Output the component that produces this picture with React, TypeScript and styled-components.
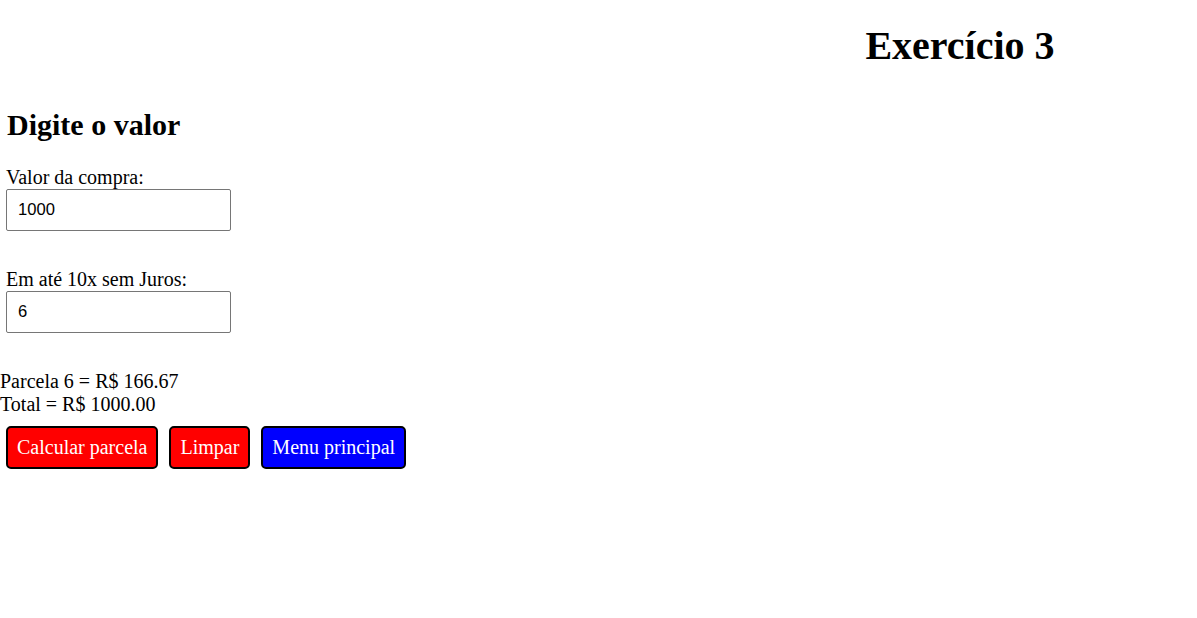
import React, { useState } from 'react';
import styled, { createGlobalStyle } from 'styled-components';

const GlobalStyle = createGlobalStyle`
  body {
    margin: 0;
    background: #ffffff;
    color: #000000;
    font-family: "Liberation Serif", "Times New Roman", serif;
    font-size: 20px;
  }
`;

const Header = styled.header`
  padding-left: 723px;
  text-align: center;
`;

const Title = styled.h1`
  margin: 23px 0 0;
  font-size: 40px;
  line-height: 46px;
  font-weight: bold;
`;

const Form = styled.form`
  padding: 0 6px;
`;

const Subtitle = styled.h2`
  margin: 39px 0 24px;
  font-size: 30px;
  line-height: 34px;
  font-weight: bold;
  padding-left: 1px;
`;

const Field = styled.div`
  display: flex;
  flex-direction: column;
  align-items: flex-start;
  margin-bottom: 37px;
`;

const Label = styled.label`
  display: block;
  font-size: 20px;
  line-height: 23px;
`;

const Input = styled.input`
  box-sizing: border-box;
  width: 225px;
  height: 42px;
  padding: 0 11px;
  border: 1px solid #767676;
  border-radius: 2px;
  font-family: "Liberation Sans", Arial, sans-serif;
  font-size: 16.6px;
  color: #000000;
  background: #ffffff;
  outline: none;
`;

const Result = styled.div`
  font-size: 20px;
  line-height: 23px;
`;

const Buttons = styled.div`
  display: flex;
  gap: 11px;
  padding: 10px 6px 0;
`;

const Button = styled.button<{ tone: 'red' | 'blue' }>`
  box-sizing: border-box;
  height: 43px;
  padding: 0 9px;
  border: 2px solid #000000;
  border-radius: 5px;
  background: ${props => (props.tone === 'blue' ? '#0000ff' : '#ff0000')};
  color: #ffffff;
  font-family: "Liberation Serif", "Times New Roman", serif;
  font-size: 20px;
  line-height: 23px;
  cursor: pointer;
`;

export default function App() {
  const [valor, setValor] = useState('1000');
  const [parcelas, setParcelas] = useState('6');

  return (
    <>
      <GlobalStyle />
      <Header>
        <Title>Exercício 3</Title>
      </Header>
      <Form onSubmit={e => e.preventDefault()}>
        <Subtitle>Digite o valor</Subtitle>
        <Field>
          <Label htmlFor="valor">Valor da compra:</Label>
          <Input id="valor" value={valor} onChange={e => setValor(e.target.value)} />
        </Field>
        <Field>
          <Label htmlFor="parcelas">Em até 10x sem Juros:</Label>
          <Input id="parcelas" value={parcelas} onChange={e => setParcelas(e.target.value)} />
        </Field>
      </Form>
      <Result>
        Parcela 6 = R$ 166.67
        <br />
        Total = R$ 1000.00
      </Result>
      <Buttons>
        <Button tone="red">Calcular parcela</Button>
        <Button tone="red">Limpar</Button>
        <Button tone="blue">Menu principal</Button>
      </Buttons>
    </>
  );
}
